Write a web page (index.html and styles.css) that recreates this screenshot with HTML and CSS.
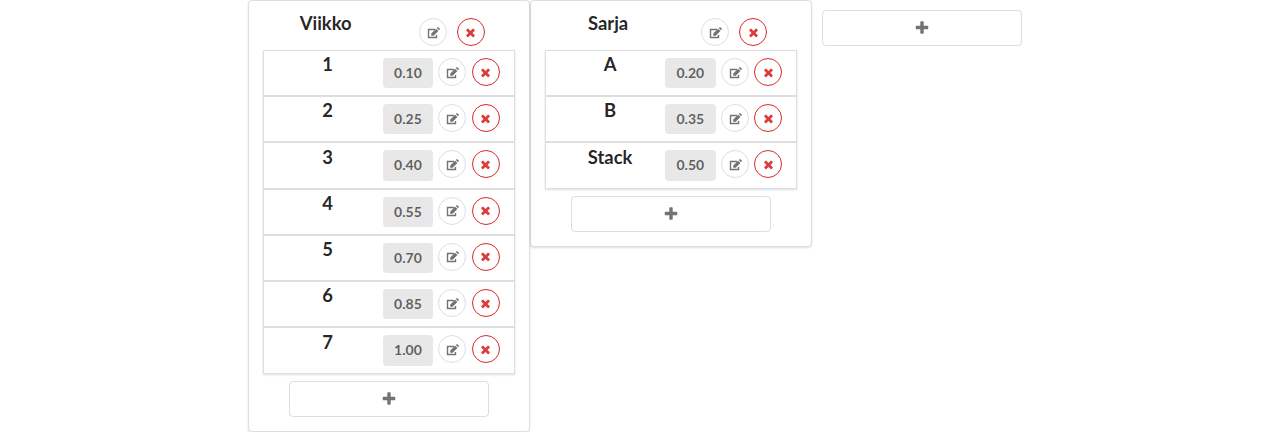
FILE: index.html
```
<!DOCTYPE html>
<html lang="fi">
<head>
<meta charset="utf-8">
<title>Viikko</title>
<link rel="stylesheet" href="styles.css">
</head>
<body>
<svg class="sprite" aria-hidden="true">
  <symbol id="edit" viewBox="0 0 13 12"><path d="M8 2.500H1.500V10.500H9.500V8" fill="none" stroke="currentColor" stroke-width="1.400"/><path d="M9.200 1.700L11.400 3.900L6.700 8.700H4.200V6.400ZM9.800 1.100L10.600.3Q11 0 11.400.3L12.700 1.600Q13 2 12.700 2.400L12 3.300Z"/></symbol>
  <symbol id="times" viewBox="0 0 1792 1792"><path d="M1490 1322q0 40-28 68l-136 136q-28 28-68 28t-68-28l-294-294-294 294q-28 28-68 28t-68-28l-136-136q-28-28-28-68t28-68l294-294-294-294q-28-28-28-68t28-68l136-136q28-28 68-28t68 28l294 294 294-294q28-28 68-28t68 28l136 136q28 28 28 68t-28 68l-294 294 294 294q28 28 28 68z"/></symbol>
  <symbol id="plus" viewBox="0 0 1792 1792"><path d="M1600 736v192q0 40-28 68t-68 28h-416v416q0 40-28 68t-68 28h-192q-40 0-68-28t-28-68v-416h-416q-40 0-68-28t-28-68v-192q0-40 28-68t68-28h416v-416q0-40 28-68t68-28h192q40 0 68 28t28 68v416h416q40 0 68 28t28 68z"/></symbol>
</svg>
<main class="board">
  <section class="card">
    <header class="card-header">
      <h3 class="title">Viikko</h3>
      <button class="circle"><svg class="edit"><use href="#edit"/></svg></button>
      <button class="circle red"><svg class="icon"><use href="#times"/></svg></button>
    </header>
    <div class="rows">
      <div class="row"><h3 class="name">1</h3><span class="label">0.10</span><button class="circle"><svg class="edit"><use href="#edit"/></svg></button><button class="circle red"><svg class="icon"><use href="#times"/></svg></button></div>
      <div class="row"><h3 class="name">2</h3><span class="label">0.25</span><button class="circle"><svg class="edit"><use href="#edit"/></svg></button><button class="circle red"><svg class="icon"><use href="#times"/></svg></button></div>
      <div class="row"><h3 class="name">3</h3><span class="label">0.40</span><button class="circle"><svg class="edit"><use href="#edit"/></svg></button><button class="circle red"><svg class="icon"><use href="#times"/></svg></button></div>
      <div class="row"><h3 class="name">4</h3><span class="label">0.55</span><button class="circle"><svg class="edit"><use href="#edit"/></svg></button><button class="circle red"><svg class="icon"><use href="#times"/></svg></button></div>
      <div class="row"><h3 class="name">5</h3><span class="label">0.70</span><button class="circle"><svg class="edit"><use href="#edit"/></svg></button><button class="circle red"><svg class="icon"><use href="#times"/></svg></button></div>
      <div class="row"><h3 class="name">6</h3><span class="label">0.85</span><button class="circle"><svg class="edit"><use href="#edit"/></svg></button><button class="circle red"><svg class="icon"><use href="#times"/></svg></button></div>
      <div class="row"><h3 class="name">7</h3><span class="label">1.00</span><button class="circle"><svg class="edit"><use href="#edit"/></svg></button><button class="circle red"><svg class="icon"><use href="#times"/></svg></button></div>
    </div>
    <button class="add"><svg class="plus"><use href="#plus"/></svg></button>
  </section>
  <section class="card">
    <header class="card-header">
      <h3 class="title">Sarja</h3>
      <button class="circle"><svg class="edit"><use href="#edit"/></svg></button>
      <button class="circle red"><svg class="icon"><use href="#times"/></svg></button>
    </header>
    <div class="rows">
      <div class="row"><h3 class="name">A</h3><span class="label">0.20</span><button class="circle"><svg class="edit"><use href="#edit"/></svg></button><button class="circle red"><svg class="icon"><use href="#times"/></svg></button></div>
      <div class="row"><h3 class="name">B</h3><span class="label">0.35</span><button class="circle"><svg class="edit"><use href="#edit"/></svg></button><button class="circle red"><svg class="icon"><use href="#times"/></svg></button></div>
      <div class="row"><h3 class="name">Stack</h3><span class="label">0.50</span><button class="circle"><svg class="edit"><use href="#edit"/></svg></button><button class="circle red"><svg class="icon"><use href="#times"/></svg></button></div>
    </div>
    <button class="add"><svg class="plus"><use href="#plus"/></svg></button>
  </section>
  <button class="add add-column"><svg class="plus"><use href="#plus"/></svg></button>
</main>
</body>
</html>
```
FILE: styles.css
```
* { box-sizing: border-box; }
body {
  margin: 0;
  height: 432px;
  overflow: hidden;
  background: #fff;
  font: 14px/18px Lato, sans-serif;
  color: rgba(0, 0, 0, .87);
}
.sprite { display: none; }
.board {
  display: flex;
  align-items: flex-start;
  padding-left: 247.7px;
}
.card {
  width: 282.4px;
  padding: 0 14px 14px;
  border: 1px solid rgba(34, 36, 38, .15);
  border-radius: 4px;
  box-shadow: 0 1px 2px 0 rgba(34, 36, 38, .15);
}
.card-header {
  display: flex;
  align-items: flex-start;
  height: 49px;
  padding: 17px 29px 0 0;
}
.title, .name {
  margin: 0;
  font-size: 18.4px;
  line-height: 23px;
  font-weight: 700;
  text-align: center;
}
.title { width: 126px; margin-top: -6px; }
.card-header .circle { margin-left: 10px; }
.card-header .title + .circle { margin-left: 30px; }
.rows {
  margin-bottom: 7.2px;
  box-shadow: 0 1px 2px 0 rgba(34, 36, 38, .15);
}
.row {
  display: flex;
  align-items: flex-start;
  height: 46.24px;
  padding: 7px 0 0;
  border: 1px solid rgba(34, 36, 38, .15);
}
.name { width: 128px; margin-top: -4.9px; }
.label {
  width: 50.5px;
  height: 30.2px;
  margin-left: -9px;
  border-radius: 4px;
  background: #e8e8e8;
  color: rgba(0, 0, 0, .6);
  font-weight: 700;
  line-height: 30px;
  text-align: center;
}
.circle {
  display: flex;
  flex: none;
  align-items: center;
  justify-content: center;
  width: 28px;
  height: 28px;
  padding: 0;
  border: 1px solid rgba(34, 36, 38, .15);
  border-radius: 50%;
  background: none;
  color: rgba(0, 0, 0, .55);
}
.label + .circle { margin-left: 5.3px; }
.row .red { margin-left: 5.5px; }
.red { border-color: #db2828; color: #de3b3b; }
.icon { width: 13px; height: 13px; fill: currentColor; }
.edit { width: 13px; height: 12px; margin: 1px 0 0 1px; fill: currentColor; }
.add {
  display: flex;
  align-items: center;
  justify-content: center;
  width: 200px;
  height: 36px;
  margin: 0 auto;
  padding: 0;
  border: 1px solid rgba(34, 36, 38, .15);
  border-radius: 4px;
  background: none;
  color: rgba(0, 0, 0, .55);
}
.plus { width: 16px; height: 16px; fill: currentColor; }
.add-column { margin: 10px 0 0 10px; }
```
